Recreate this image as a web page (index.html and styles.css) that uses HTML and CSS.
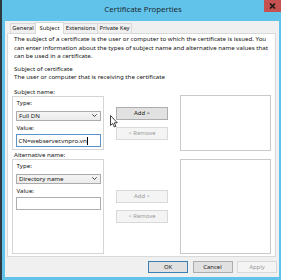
FILE: index.html
```html
<!DOCTYPE html>
<html>
<head>
<meta charset="utf-8">
<link rel="stylesheet" href="styles.css">
</head>
<body>
<div class="desktop">
  <div class="window">
    <div class="titlebar">
      <div></div>
      <div class="title">Certificate Properties</div>
      <div class="close"><svg width="7" height="6" viewBox="0 0 7 6"><path d="M1 0.5 L6 5.5 M6 0.5 L1 5.5" stroke="#1a1a1a" stroke-width="1.6"/></svg></div>
    </div>
    <div class="client">
      <div class="tabs">
        <div class="tab tab-general">General</div>
        <div class="tab tab-active">Subject</div>
        <div class="tab tab-ext">Extensions</div>
        <div class="tab tab-key">Private Key</div>
      </div>
      <div class="panel">
        <p class="intro">The subject of a certificate is the user or computer to which the certificate is issued. You<br>can enter information about the types of subject name and alternative name values that<br>can be used in a certificate.</p>
        <div class="subhead">Subject of certificate</div>
        <div class="subhead">The user or computer that is receiving the certificate</div>
        <div class="sections">
          <div class="section sect-subject">
            <div class="leftcol">
              <div class="grouplabel">Subject name:</div>
              <div class="groupbox gb-subject">
                <div class="flabel">Type:</div>
                <div class="combo"><span>Full DN</span><svg width="5" height="3" viewBox="0 0 5 3"><path d="M0.3 0.3 L2.5 2.5 L4.7 0.3" stroke="#333" stroke-width="0.9" fill="none"/></svg></div>
                <div class="flabel flabel-value">Value:</div>
                <div class="input input-focus"><span>CN=webserver.vnpro.vn</span><span class="caret"></span></div>
              </div>
            </div>
            <div class="midcol">
              <div class="btn">Add &gt;</div>
              <div class="btn btn-disabled">&lt; Remove</div>
            </div>
            <div class="listbox lb-subject"></div>
          </div>
          <div class="section sect-alt">
            <div class="leftcol">
              <div class="grouplabel">Alternative name:</div>
              <div class="groupbox gb-alt">
                <div class="flabel">Type:</div>
                <div class="combo"><span>Directory name</span><svg width="5" height="3" viewBox="0 0 5 3"><path d="M0.3 0.3 L2.5 2.5 L4.7 0.3" stroke="#333" stroke-width="0.9" fill="none"/></svg></div>
                <div class="flabel flabel-value">Value:</div>
                <div class="input"></div>
              </div>
            </div>
            <div class="midcol">
              <div class="btn btn-disabled">Add &gt;</div>
              <div class="btn btn-disabled">&lt; Remove</div>
            </div>
            <div class="listbox lb-alt"></div>
          </div>
        </div>
      </div>
      <div class="footer">
        <div class="btn btn-foot btn-default">OK</div>
        <div class="btn btn-foot">Cancel</div>
        <div class="btn btn-foot btn-disabled">Apply</div>
      </div>
    </div>
  </div>
  <svg class="cursor" width="8" height="13" viewBox="0 0 8 13"><path d="M0.5 0.5 L0.5 10.5 L2.8 8.4 L4.4 12 L5.9 11.3 L4.3 7.8 L7.3 7.8 Z" fill="#fff" stroke="#111" stroke-width="0.8" stroke-linejoin="round"/></svg>
</div>
</body>
</html>
```
FILE: styles.css
```css
* { box-sizing: border-box; }
html, body { margin: 0; padding: 0; }
body {
  width: 281px;
  height: 280px;
  overflow: hidden;
  font-family: "Noto Sans", "Open Sans", sans-serif;
  font-size: 6.15px;
  color: #151515;
}
.desktop {
  position: relative;
  width: 281px;
  height: 280px;
  background: #2e3a40;
  display: flex;
}
.window {
  margin-left: 2px;
  flex: 1;
  background: #61c3ea;
  padding: 0 4px 3px 3px;
  display: flex;
  flex-direction: column;
}
.titlebar {
  height: 21px;
  display: grid;
  grid-template-columns: 1fr auto 1fr;
  align-items: start;
}
.title {
  font-size: 7.8px;
  line-height: 19px;
  color: #1e2a30;
  padding-left: 2px;
}
.close {
  justify-self: end;
  width: 17px;
  height: 12px;
  margin-right: -2px;
  background: #c75050;
  display: flex;
  align-items: center;
  justify-content: center;
}
.client {
  flex: 1;
  background: #f0f0f0;
  padding: 1px 2px 4px 2px;
  display: flex;
  flex-direction: column;
}
.tabs {
  height: 11px;
  display: flex;
  align-items: flex-end;
  padding-left: 3px;
  position: relative;
  z-index: 1;
}
.tab {
  height: 10px;
  line-height: 9px;
  border: 1px solid #d9d9d9;
  border-bottom: none;
  background: #f0f0f0;
  margin-right: -1px;
  font-size: 5.8px;
  white-space: nowrap;
  text-align: center;
}
.tab-general { width: 26px; }
.tab-active { width: 29px; }
.tab-ext { width: 35px; }
.tab-key { width: 35px; }
.tab-active {
  height: 12px;
  margin-bottom: -1px;
  background: #fff;
  line-height: 10px;
  position: relative;
}
.panel {
  height: 224px;
  margin: 0 1px 0 0;
  border: 1px solid #d9d9d9;
  background: #fff;
  padding: 1px 4px 3px 4px;
}
.intro {
  margin: 0;
  padding-left: 2px;
  line-height: 8.5px;
  white-space: nowrap;
}
.subhead {
  padding-left: 2px;
  line-height: 8.5px;
}
.subhead:first-of-type { margin-top: 4px; }
.sections {
  margin-top: 6.5px;
  display: flex;
  flex-direction: column;
}
.section {
  display: flex;
  align-items: flex-start;
}
.leftcol {
  width: 92px;
}
.grouplabel {
  line-height: 8px;
  padding-left: 2px;
}
.groupbox {
  border: 1px solid #d5d5d5;
  padding: 2px 2px 0 3px;
}
.gb-subject { height: 54px; }
.gb-alt { height: 95px; }
.flabel { line-height: 8.5px; padding-left: 0.5px; }
.flabel-value { margin-top: 3px; }
.combo {
  margin-top: 3px;
  height: 10px;
  border: 1px solid #acacac;
  background: linear-gradient(#f4f4f4, #ebebeb);
  display: flex;
  align-items: center;
  justify-content: space-between;
  padding: 0 3px 0 2px;
}
.input {
  margin-top: 2px;
  height: 13px;
  border: 1px solid #abadb3;
  background: #fff;
  display: flex;
  align-items: center;
  padding: 0 1.5px;
}
.input-focus { border-color: #5b93c9; }
.caret {
  width: 0;
  height: 8px;
  border-left: 1px solid #000;
  margin-left: 0.5px;
}
.midcol {
  width: 52px;
  margin-left: 12px;
  display: flex;
  flex-direction: column;
  gap: 7.5px;
}
.sect-subject .midcol { padding-top: 19px; }
.sect-alt .midcol { padding-top: 39px; }
.btn {
  height: 12.5px;
  border: 1px solid #adadad;
  background: #e1e1e1;
  display: flex;
  align-items: center;
  justify-content: center;
  font-size: 5.9px;
}
.btn-disabled {
  border-color: #d9d9d9;
  background: #f4f4f4;
  color: #9a9a9a;
}
.listbox {
  width: 91px;
  margin-left: 12px;
  border: 1px solid #c9c9c9;
  background: #fff;
}
.lb-subject { height: 56px; margin-top: 7px; }
.lb-alt { height: 95px; margin-top: 8px; }
.footer {
  margin-top: 4px;
  height: 12px;
  display: flex;
  justify-content: flex-end;
  gap: 4.5px;
}
.btn-foot {
  width: 40px;
  height: 12px;
}
.btn-default { border-color: #3c7fb1; }
.cursor {
  position: absolute;
  left: 110px;
  top: 115px;
}
```
